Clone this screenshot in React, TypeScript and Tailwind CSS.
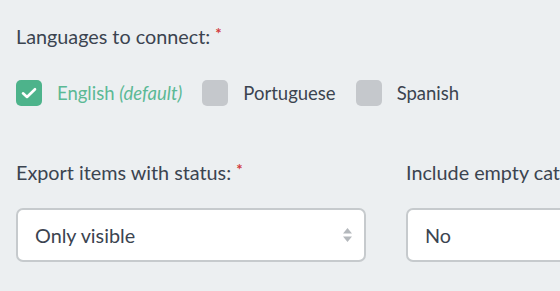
import React from "react";

function Check({ checked }: { checked?: boolean }) {
  return checked ? (
    <span className="flex h-[26px] w-[26px] shrink-0 items-center justify-center rounded-[5px] bg-[#4db38b]">
      <svg width="16" height="12" viewBox="0 0 16 12" fill="none">
        <path d="M2 6.3 L6 10 L14 2.2" stroke="#fff" strokeWidth="2.6" strokeLinecap="round" strokeLinejoin="round" />
      </svg>
    </span>
  ) : (
    <span className="h-[26px] w-[26px] shrink-0 rounded-[5px] bg-[#c5c8cc]" />
  );
}

function Select({ value, arrows }: { value: string; arrows?: boolean }) {
  return (
    <div className="flex h-[54px] w-[350px] shrink-0 items-center justify-between rounded-[7px] border-2 border-[#c6cacd] bg-white pl-[17px] pr-[11px]">
      <span className="text-[19.8px] leading-[28px] text-[#3b4450]">{value}</span>
      {arrows && (
        <svg width="11" height="16" viewBox="0 0 11 16">
          <path d="M5.5 1 L10 6.5 H1 Z" fill="#b4b8bc" />
          <path d="M5.5 15 L10 9.5 H1 Z" fill="#b4b8bc" />
        </svg>
      )}
    </div>
  );
}

function Req() {
  return (
    <span className="relative top-[4px] ml-[5px] inline-block align-top text-[15px] leading-[14px] font-bold text-[#d23b3b]">*</span>
  );
}

export default function App() {
  return (
    <div
      className="h-[291px] w-[560px] overflow-hidden bg-[#eceff1] pl-4 pt-[22px] text-[#3b4450]"
      style={{ fontFamily: "Lato, 'Open Sans', sans-serif" }}
    >
      <div className="h-[28px] text-[19.8px] leading-[28px] whitespace-nowrap">
        Languages to connect:
        <Req />
      </div>
      <div className="mt-[29px] flex h-[28px] items-center text-[18.5px] leading-[28px] whitespace-nowrap">
        <div className="flex items-center gap-[15px]">
          <Check checked />
          <span className="text-[#5bb995]">
            English <i>(default)</i>
          </span>
        </div>
        <div className="ml-[20px] flex items-center gap-[15px]">
          <Check />
          <span>Portuguese</span>
        </div>
        <div className="ml-[20px] flex items-center gap-[15px]">
          <Check />
          <span>Spanish</span>
        </div>
      </div>
      <div className="mt-[51px] flex gap-[40px] whitespace-nowrap">
        <div className="flex flex-col">
          <div className="h-[28px] text-[19.8px] leading-[28px]">
            Export items with status:
            <Req />
          </div>
          <div className="mt-[22px]">
            <Select value="Only visible" arrows />
          </div>
        </div>
        <div className="flex flex-col">
          <div className="h-[28px] text-[19.8px] leading-[28px]">Include empty categories:</div>
          <div className="mt-[22px]">
            <Select value="No" arrows />
          </div>
        </div>
      </div>
    </div>
  );
}
